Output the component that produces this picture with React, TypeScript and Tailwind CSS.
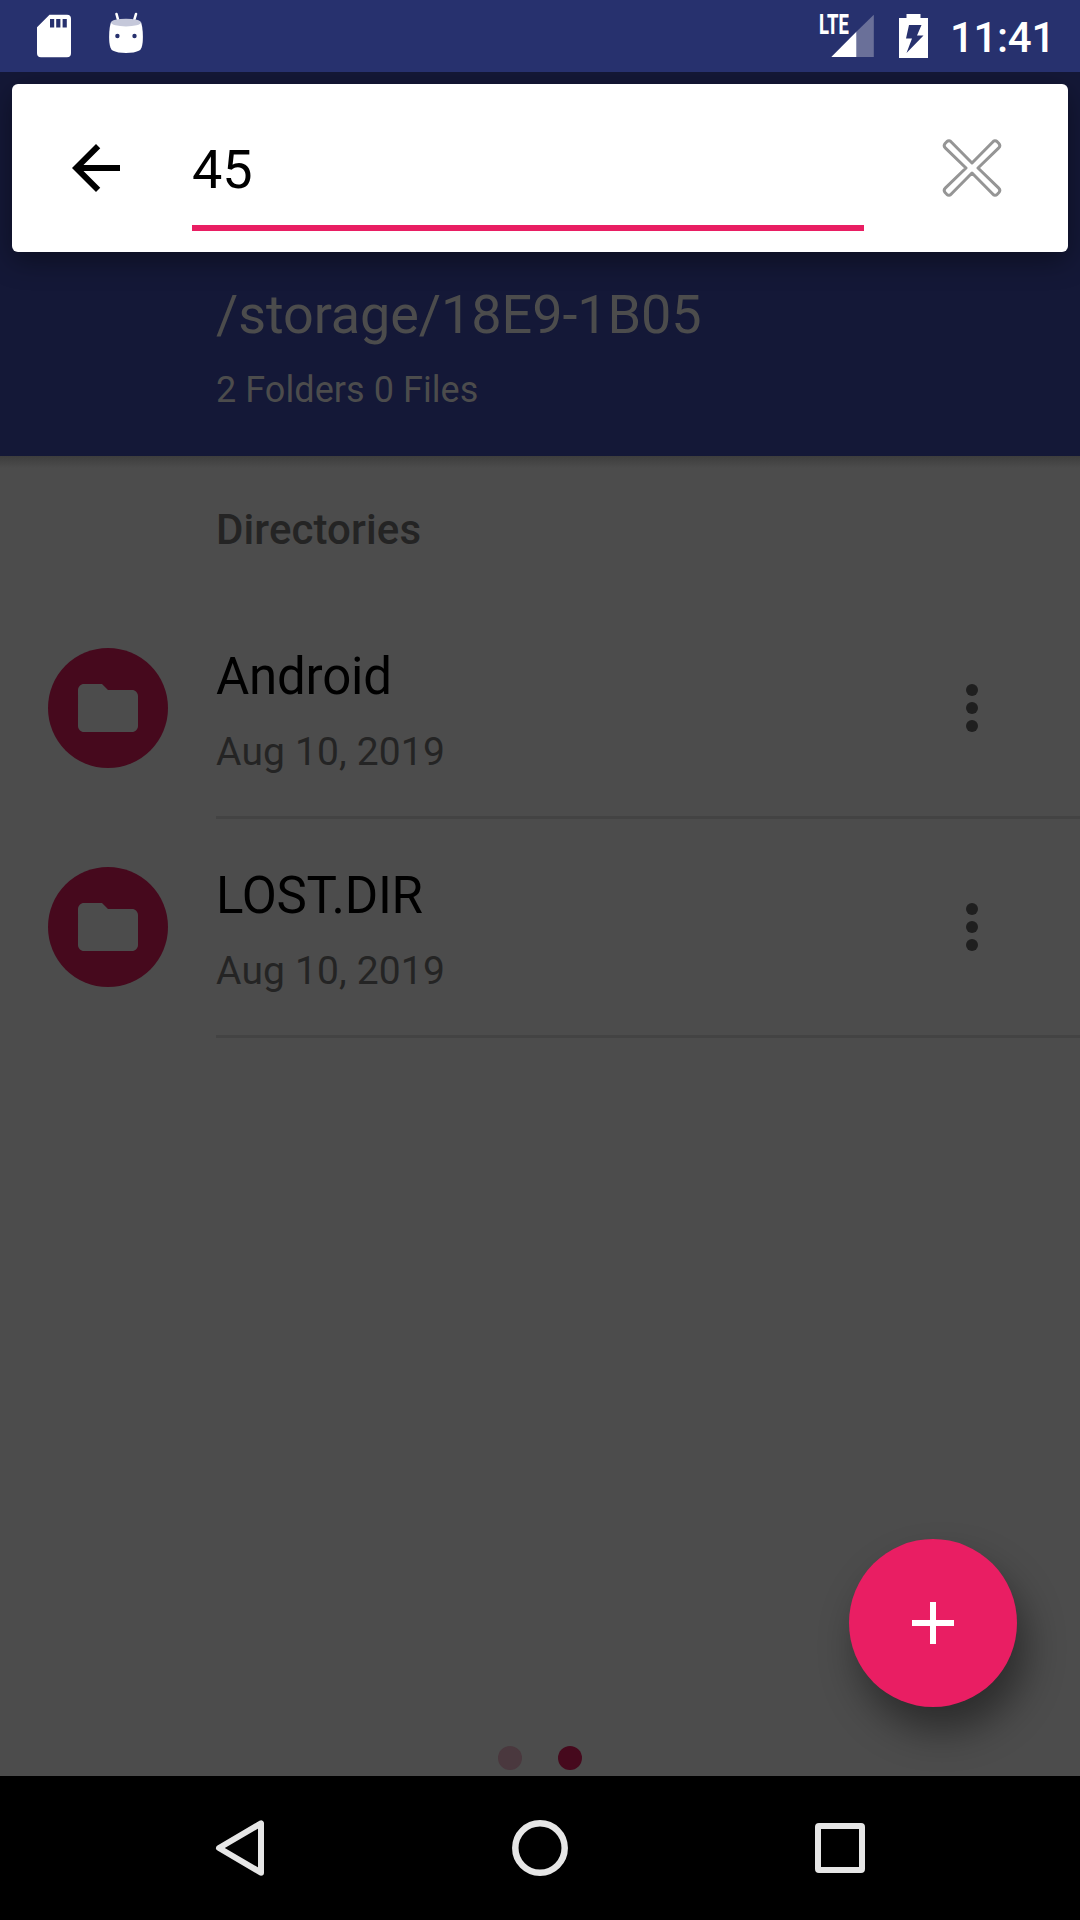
function StatusBar() {
  return (
    <header className="flex h-[72px] items-start bg-[#27316e] text-white">
      <svg className="ml-9 mt-[14px] h-[44px] w-[36px]" viewBox="0 0 36 44" fill="none">
        <path
          fill="#fff"
          fillRule="evenodd"
          d="M13.5.7H31a4 4 0 0 1 4 4v34.5a4 4 0 0 1-4 4H5a4 4 0 0 1-4-4V13.300ZM14 5v8.500h4.200V5Zm6.200 0v8.500h4.200V5Zm6.400 0v8.500h4.200V5Z"
        />
      </svg>
      <svg className="ml-9 mt-[11px] h-[44px] w-[36px]" viewBox="0 0 36 44">
        <path d="M8.500 3l2.200 8M28 3l-2.400 8" stroke="#fff" strokeWidth="2.600" strokeLinecap="round" />
        <path
          fill="#fff"
          d="M2.800 11.500C1.200 17 .8 25 1.300 31c.5 4.500 1.400 7.200 3.300 8.500C7.500 41.200 13 42 18 42s10.500-.8 13.400-2.500c1.900-1.300 2.800-4 3.300-8.500.5-6 .1-14-1.500-19.500Z"
        />
        <ellipse cx="18" cy="11.600" rx="15" ry="3.900" fill="#c5c8da" />
        <circle cx="9.400" cy="25" r="2.200" fill="#27316e" />
        <circle cx="26.500" cy="25" r="2.200" fill="#27316e" />
      </svg>
      <div className="relative ml-auto mt-[14px] h-[44px] w-[54px]">
        <svg className="h-[44px] w-[54px]" viewBox="0 0 54 44">
          <path d="M36.600 17.500V43H11.300Z" fill="#fff" />
          <path d="M36.600 17.500V43H53.800V.7Z" fill="#6a7099" />
        </svg>
        <span className="absolute -top-[4px] -left-px origin-left scale-x-[0.68] text-[27px] leading-[30px] font-extrabold">LTE</span>
      </div>
      <svg className="ml-[25px] mt-[14px] h-[44px] w-[30px]" viewBox="0 0 30 44">
        <path
          fill="#fff"
          fillRule="evenodd"
          d="M7.500 0H21.500V4H29V44H0V4H7.500ZM10 11 7 24.500H13L7.500 39 24.500 21.500H18L22.500 11Z"
        />
      </svg>
      <span className="ml-[20px] mr-[25px] mt-[13px] w-[106px] text-right text-[42px] leading-[50px] font-medium tracking-[-0.3px]">11:41</span>
    </header>
  );
}

function SearchBar() {
  return (
    <div className="relative z-10 mx-3 mt-3 flex h-[168px] rounded-[6px] bg-white shadow-[0_8px_28px_rgba(0,0,0,0.4)]">
      <svg className="ml-[48px] mt-[48px] size-[72px]" viewBox="0 0 24 24" fill="#000">
        <path d="M20 11H7.830l5.590-5.590L12 4l-8 8 8 8 1.410-1.410L7.830 13H20v-2z" />
      </svg>
      <div className="ml-[60px] h-[147px] w-[672px] border-b-[6px] border-[#e91e63] pt-[54px] text-[54px] leading-[64px] text-black">45</div>
      <svg className="ml-[78px] mt-[54px] size-[60px]" viewBox="0 0 60 60" fill="none" stroke="#959595" strokeWidth="3" strokeLinejoin="round">
        <path d="M30 25 50.500 4.200Q52.800 1.500 55.200 3.700L56.700 5.200Q59 7.800 56.500 10.200L36 30 56.500 49.800Q59 52.200 56.700 54.800L55.200 56.300Q52.800 58.500 50.500 55.800L30 35 9.500 55.800Q7.200 58.500 4.800 56.300L3.300 54.800Q1 52.200 3.500 49.800L24 30 3.500 10.200Q1 7.800 3.300 5.200L4.800 3.700Q7.200 1.500 9.500 4.200Z" />
      </svg>
    </div>
  );
}

function FolderRow({ name, date }: { name: string; date: string }) {
  return (
    <li className="flex h-[219px] pl-12">
      <div className="mt-[48px] flex size-[120px] items-center justify-center rounded-full bg-[#46091d]">
        <svg className="size-[72px]" viewBox="0 0 24 24" fill="#4c4c4c">
          <path d="M10 4H4c-1.100 0-1.990.9-1.990 2L2 18c0 1.100.9 2 2 2h16c1.100 0 2-.9 2-2V8c0-1.100-.9-2-2-2h-8l-2-2z" />
        </svg>
      </div>
      <div className="ml-12 flex flex-1 border-b-[3px] border-[#434343]">
        <div className="flex-1 pt-[47px]">
          <div className="text-[51px] leading-[60px] tracking-[-0.2px] text-black">{name}</div>
          <div className="mt-[22px] text-[39px] leading-[46px] tracking-[0.15px] text-[#242424]">{date}</div>
        </div>
        <div className="mr-[102px] mt-[84px] flex h-12 w-3 flex-col gap-[6px]">
          <i className="size-3 rounded-full bg-[#1f1f1f]" />
          <i className="size-3 rounded-full bg-[#1f1f1f]" />
          <i className="size-3 rounded-full bg-[#1f1f1f]" />
        </div>
      </div>
    </li>
  );
}

function NavigationBar() {
  return (
    <nav className="flex h-36 items-center justify-between bg-black px-[204px]">
      <svg className="size-[72px]" viewBox="0 0 72 72" fill="none" stroke="#e6e6e6" strokeWidth="6" strokeLinejoin="round">
        <path d="M57 11.300V60.700L15 36Z" />
      </svg>
      <svg className="size-[72px]" viewBox="0 0 72 72" fill="none" stroke="#e6e6e6" strokeWidth="6.500">
        <circle cx="36" cy="36" r="24.700" />
      </svg>
      <svg className="size-[72px]" viewBox="0 0 72 72" fill="none" stroke="#e6e6e6" strokeWidth="6" strokeLinejoin="round">
        <rect x="14" y="14" width="44" height="44" rx="1" />
      </svg>
    </nav>
  );
}

export default function App() {
  return (
    <div className="flex h-[1920px] w-[1080px] flex-col overflow-hidden bg-[#4c4c4c] font-[Roboto,sans-serif]">
      <StatusBar />
      <section className="relative z-10 h-[384px] overflow-hidden bg-[#141837] text-[#4c4c4c]">
        <div className="flex flex-col">
          <SearchBar />
          <div className="pl-[216px]">
            <h1 className="mt-[31px] text-[54px] leading-[64px] tracking-[-0.1px]">/storage/18E9-1B05</h1>
            <p className="mt-[22px] text-[36px] leading-[42px] tracking-[0.06px]">2 Folders 0 Files</p>
          </div>
        </div>
      </section>
      <main className="relative flex-1 before:block before:h-3 before:bg-linear-to-b before:from-[#3d3d3d] before:to-[#4c4c4c]">
        <h2 className="pl-[216px] pt-[37px] text-[42px] leading-[50px] font-medium tracking-[0.1px] text-[#242424]">Directories</h2>
        <ul className="mt-[45px]">
          <FolderRow name="Android" date="Aug 10, 2019" />
          <FolderRow name="LOST.DIR" date="Aug 10, 2019" />
        </ul>
        <button className="absolute right-[63px] bottom-[69px] flex size-[168px] items-center justify-center rounded-full bg-[#e91e63] shadow-[9px_24px_38px_rgba(0,0,0,0.42)]">
          <svg className="size-[72px]" viewBox="0 0 24 24" fill="#fff">
            <path d="M19 13h-6v6h-2v-6H5v-2h6V5h2v6h6v2z" />
          </svg>
        </button>
        <div className="absolute inset-x-0 bottom-[6px] flex justify-center gap-9">
          <i className="size-6 rounded-full bg-[#4a383e]" />
          <i className="size-6 rounded-full bg-[#46091d]" />
        </div>
      </main>
      <NavigationBar />
    </div>
  );
}
